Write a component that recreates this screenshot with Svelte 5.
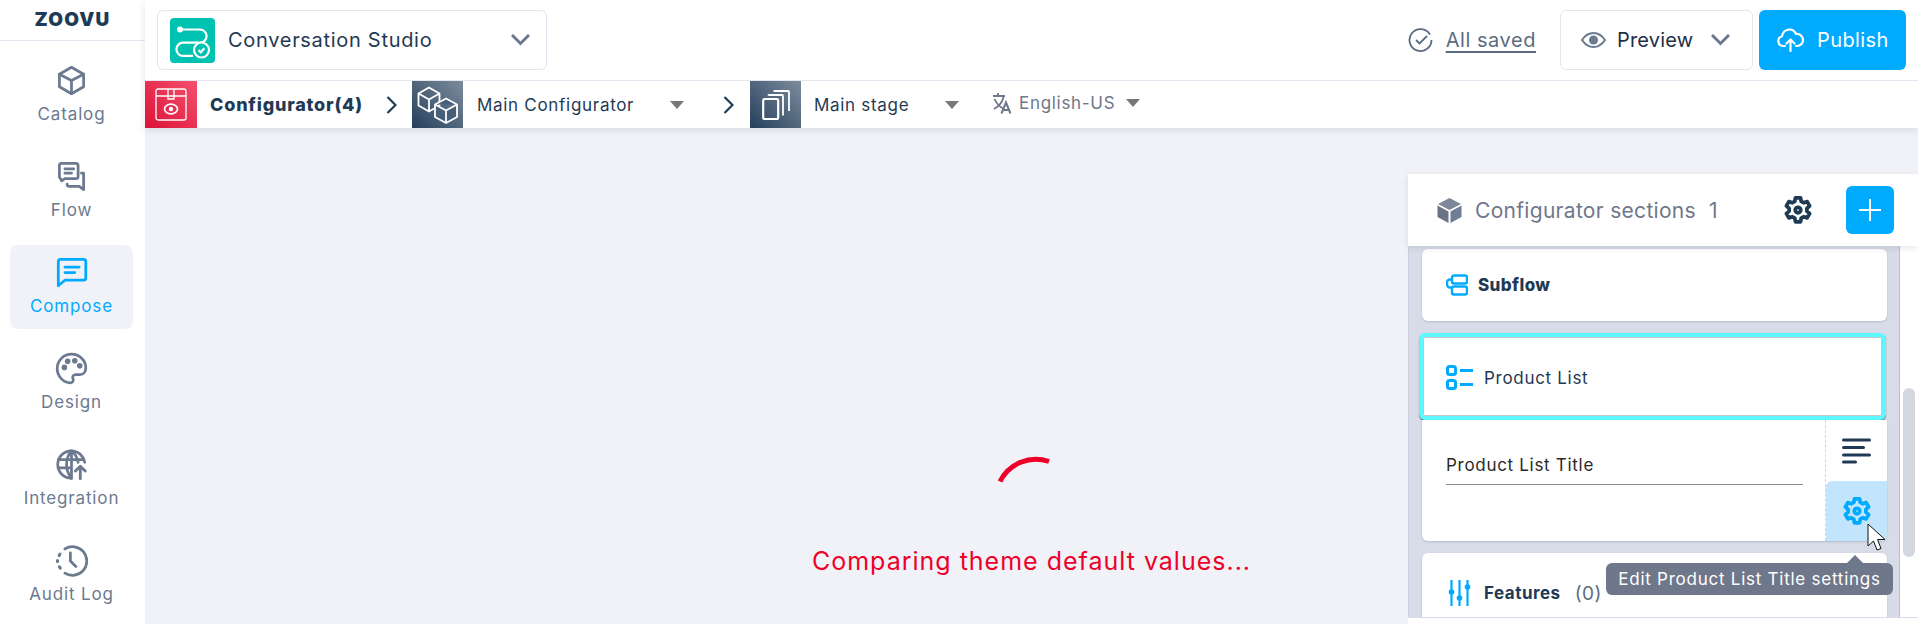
<script lang="ts">
    const nav = [
        { label: "Catalog", icon: "cube" },
        { label: "Flow", icon: "chats" },
        { label: "Compose", icon: "chat", active: true },
        { label: "Design", icon: "palette" },
        { label: "Integration", icon: "globe" },
        { label: "Audit Log", icon: "clock" },
    ];
</script>

{#snippet gear(size)}
    <svg width={size} height={size} viewBox="0 0 24 24" fill="none" stroke="currentColor" stroke-width="3" stroke-linejoin="round">
        <path d="M10 2.200h4l.6 2.900 1.900 1.100 2.800-.9 2 3.400-2.200 2v2.200l2.200 2-2 3.400-2.800-.9-1.900 1.100-.6 2.900h-4l-.6-2.900-1.900-1.100-2.800.9-2-3.400 2.200-2v-2.200l-2.200-2 2-3.400 2.800.9 1.900-1.100z" />
        <circle cx="12" cy="12" r="2.200" />
    </svg>
{/snippet}

{#snippet caret()}
    <svg class="caret" width="14" height="8" viewBox="0 0 14 8"><path d="M0 0h14L7 8z" fill="#77787b" /></svg>
{/snippet}

{#snippet crumbArrow()}
    <svg class="crumb-arrow" width="11" height="18" viewBox="0 0 11 18" fill="none" stroke="#1f3a55" stroke-width="2.200"><path d="M1.500 1l8 8-8 8" /></svg>
{/snippet}

<div class="app">
    <aside class="sidebar">
        <div class="logo">ZOOVU</div>
        <nav>
            {#each nav as item}
                <div class="nav-item" class:active={item.active}>
                    <svg width="33" height="33" viewBox="0 0 30 30" fill="none" stroke="currentColor" stroke-width="2.500" stroke-linejoin="round" stroke-linecap="round">
                        {#if item.icon === "cube"}
                            <path d="M15 3l11 6.300v11.400L15 27 4 20.700V9.300z" />
                            <path d="M4 9.300L15 15l11-5.700M15 15v12" />
                        {:else if item.icon === "chats"}
                            <path d="M6 3h13a2 2 0 0 1 2 2v10a2 2 0 0 1-2 2H9l-3 2-1-2a2 2 0 0 1-1-2V5a2 2 0 0 1 2-2z" />
                            <path d="M9 8h8M9 12h6" />
                            <path d="M24 12h2v15l-4-3H13a2 2 0 0 1-2-2" />
                        {:else if item.icon === "chat"}
                            <path d="M5 3h21a2 2 0 0 1 2 2v15a2 2 0 0 1-2 2H9l-6 5V5a2 2 0 0 1 2-2z" />
                            <path d="M9 10h13M9 15h9" />
                        {:else if item.icon === "palette"}
                            <path d="M15 2C7.800 2 2 7.800 2 15s5.800 13 12 13c2.500 0 3-2 2.300-3.800-.8-2 .4-3.700 2.700-3.700h3.500c3.500 0 5.500-2.500 5.500-6C28 7.500 22.200 2 15 2z" />
                            <circle cx="8.500" cy="14" r="1.300" fill="currentColor" />
                            <circle cx="11.500" cy="8.500" r="1.300" fill="currentColor" />
                            <circle cx="18" cy="8" r="1.300" fill="currentColor" />
                            <circle cx="22.500" cy="12.500" r="1.300" fill="currentColor" />
                        {:else if item.icon === "globe"}
                            <path d="M27 13C25.800 7 20.800 2.500 15 2.500 8 2.500 2.500 8 2.500 15S8 27.500 15 27.500" />
                            <path d="M15 2.500c-6 7-6 18 0 25M15 2.500c3.500 3 5.500 7 6 10.500M3 10.500h23M3 18h11M15 2.500v25" />
                            <path d="M23 28V17M18.500 21l4.500-4.500 4.500 4.500" stroke-width="2.600" />
                        {:else}
                            <path d="M9 4.500A13 13 0 1 1 9 26.500" />
                            <path d="M4.500 9.200l-.7 1.300M2.300 15v1M4 20.700l.8 1.300" stroke-width="2.800" />
                            <path d="M14 8v7.500l5 5" />
                        {/if}
                    </svg>
                    <span>{item.label}</span>
                </div>
            {/each}
        </nav>
    </aside>

    <div class="content">
        <header class="header">
            <div class="toolbar">
                <div class="studio">
                    <span class="studio-icon">
                        <svg width="45" height="45" viewBox="0 0 45 45" fill="none" stroke="#fff" stroke-width="2.200">
                            <circle cx="10" cy="11.500" r="3" fill="#fff" stroke="none" />
                            <path d="M10 11.500h20a6.600 6.600 0 0 1 0 13.200H13a6.600 6.600 0 0 0 0 13.200h10" />
                            <circle cx="31.500" cy="32" r="7.500" fill="#00c2b0" />
                            <path d="M28.500 32l2.300 2.300 3.500-4" />
                        </svg>
                    </span>
                    <span class="studio-name">Conversation Studio</span>
                    <svg class="chevron" width="19" height="12" viewBox="0 0 19 12" fill="none" stroke="#6b7a8f" stroke-width="3"><path d="M1 1l8.500 8.500L18 1" /></svg>
                </div>
                <div class="saved">
                    <svg width="25" height="25" viewBox="0 0 25 25" fill="none" stroke="#5c6c80" stroke-width="1.800">
                        <path d="M22 6.500A11 11 0 1 0 23.500 12" />
                        <path d="M8 12l3.500 3.500L19 8" />
                    </svg>
                    <span>All saved</span>
                </div>
                <div class="preview">
                    <svg width="25" height="16" viewBox="0 0 25 16" fill="none" stroke="#6b7a8f" stroke-width="2">
                        <path d="M1 8c3-4.500 7-7 11.500-7S21 3.500 24 8c-3 4.500-7 7-11.500 7S4 12.500 1 8z" />
                        <circle cx="12.500" cy="8" r="4.500" fill="#6b7a8f" stroke="none" />
                    </svg>
                    <span>Preview</span>
                    <svg width="19" height="12" viewBox="0 0 19 12" fill="none" stroke="#6b7a8f" stroke-width="3"><path d="M1 1l8.500 8.500L18 1" /></svg>
                </div>
                <div class="publish">
                    <svg width="27" height="24" viewBox="0 0 27 24" fill="none" stroke="#fff" stroke-width="2.200" stroke-linecap="round" stroke-linejoin="round">
                        <path d="M8 18H6a5 5 0 0 1-1-9.800C5.500 4 9 1.500 12.500 1.500c3 0 5.500 1.800 6.500 4.500 4-.5 7 2.500 7 6 0 3.300-2.500 6-6 6h-1" />
                        <path d="M13.500 23V12M9.500 15.500l4-4 4 4" />
                    </svg>
                    <span>Publish</span>
                </div>
            </div>
            <div class="crumbs">
                <span class="thumb red">
                    <svg width="32" height="33" viewBox="0 0 32 33" fill="none" stroke="#fff" stroke-width="1.300">
                        <rect x="1" y="1" width="30" height="31" rx="2" />
                        <path d="M1 8h30M13 1v10h6V1" />
                        <ellipse cx="16" cy="21" rx="6.500" ry="4.800" stroke-width="1.700" />
                        <circle cx="16" cy="21" r="2.200" fill="#fff" stroke="none" />
                    </svg>
                </span>
                <strong class="crumb-title">Configurator(4)</strong>
                {@render crumbArrow()}
                <span class="thumb slate">
                    <svg width="42" height="38" viewBox="0 0 42 38" fill="none" stroke="#fff" stroke-width="1.800" stroke-linejoin="round">
                        <path d="M12 1.500l10.500 6v12l-10.500 6-10.500-6v-12zM1.500 7.500l10.500 6 10.500-6M12 13.500v12" />
                        <path d="M29 12.500l11 6v12.500L29 37l-11-6V18.500zM18 18.500L29 24.500l11-6M29 24.500V37" fill="#46607a" />
                    </svg>
                </span>
                <div class="crumb-select main-config"><span>Main Configurator</span>{@render caret()}</div>
                {@render crumbArrow()}
                <span class="thumb slate stage">
                    <svg width="28" height="30" viewBox="0 0 28 30" fill="none" stroke="#fff" stroke-width="1.800" stroke-linejoin="round">
                        <rect x="1.200" y="9" width="15" height="20" rx="1.500" stroke-width="2.200" />
                        <path d="M6.500 5.500V5H20a1 1 0 0 1 1 1v19.500" />
                        <path d="M11.500 1h14.500a1 1 0 0 1 1 1v19" />
                    </svg>
                </span>
                <div class="crumb-select main-stage"><span>Main stage</span>{@render caret()}</div>
                <div class="lang">
                    <svg width="21" height="22" viewBox="0 0 19 22" fill="none" stroke="#6f778a" stroke-width="1.800">
                        <path d="M0 4h12M5 1v3M1.500 7c2 4.500 5 7.500 8.500 9.500M10.500 5c-1 5-4 9-9.500 12" />
                        <path d="M8.500 21.500l4.500-11 4.500 11M10 18h6" stroke-width="2" />
                    </svg>
                    <span>English-US</span>
                    {@render caret()}
                </div>
            </div>
        </header>

        <main class="canvas">
            <div class="loader">
                <svg width="84" height="50" viewBox="0 0 84 50" fill="none">
                    <path d="M10 29.500A40 40 0 0 1 59 9.500" stroke="#ee0028" stroke-width="5" />
                </svg>
                <p>Comparing theme default values...</p>
            </div>

            <section class="panel">
                <div class="panel-head">
                    <svg width="25" height="25" viewBox="0 0 25 25">
                        <path d="M12.500 0l11.500 6-11.500 6L1 6z" fill="#7d8799" />
                        <path d="M.5 7.500l11 6V25l-11-6z" fill="#6b7486" />
                        <path d="M24.500 7.500l-11 6V25l11-6z" fill="#6f7d96" />
                    </svg>
                    <span class="panel-title">Configurator sections</span>
                    <span class="panel-count">1</span>
                    <span class="panel-gear">{@render gear(30)}</span>
                    <button class="add" aria-label="Add">
                        <svg width="22" height="22" viewBox="0 0 22 22" stroke="#fff" stroke-width="2"><path d="M11 0v22M0 11h22" /></svg>
                    </button>
                </div>
                <div class="panel-body">
                    <div class="list">
                        <div class="card subflow">
                            <svg width="22" height="22" viewBox="0 0 22 22" fill="none" stroke="#00aaff" stroke-width="2.400">
                                <rect x="6" y="1.500" width="15" height="8" rx="2" />
                                <rect x="6" y="12.500" width="15" height="8" rx="2" />
                                <path d="M6 5.500H4a3 3 0 0 0-3 3v2a3 3 0 0 0 3 3h2" />
                            </svg>
                            <strong>Subflow</strong>
                        </div>
                        <div class="product">
                            <div class="product-head">
                                <svg width="27" height="25" viewBox="0 0 27 25" fill="none" stroke="#00aaff" stroke-width="3">
                                    <rect x="1.500" y="1.500" width="8" height="8" rx="2" />
                                    <rect x="1.500" y="15.500" width="8" height="8" rx="2" />
                                    <path d="M14 5.500h13M14 19.500h13" />
                                </svg>
                                <span>Product List</span>
                            </div>
                            <div class="product-body">
                                <div class="title-field"><span>Product List Title</span></div>
                                <div class="actions">
                                    <div class="action">
                                        <svg width="29" height="26" viewBox="0 0 29 26" stroke="#1f3a55" stroke-width="3" stroke-linecap="round">
                                            <path d="M1.500 2h26M1.500 9.500h20M1.500 17h26M1.500 24h12" />
                                        </svg>
                                    </div>
                                    <div class="action hovered">{@render gear(30)}</div>
                                </div>
                            </div>
                        </div>
                        <div class="card features">
                            <svg width="23" height="26" viewBox="0 0 23 26" stroke="#00aaff" stroke-width="2.200" fill="#00aaff">
                                <path d="M3.500 0v26M11.500 0v26M19.500 0v26" />
                                <circle cx="3.500" cy="12" r="2.800" stroke="none" />
                                <circle cx="11.500" cy="18" r="2.800" stroke="none" />
                                <circle cx="19.500" cy="7" r="2.800" stroke="none" />
                            </svg>
                            <strong>Features</strong>
                            <span>(0)</span>
                        </div>
                        <div class="tooltip">Edit Product List Title settings</div>
                        <svg class="cursor" width="19" height="29" viewBox="0 0 19 29">
                            <path d="M1 1v22l5.500-5 3.500 9 4-1.500-3.500-9h7.500z" fill="#fff" stroke="#111" stroke-width="1" />
                        </svg>
                    </div>
                    <div class="rail"><div class="rail-thumb"></div></div>
                </div>
                <div class="panel-foot"></div>
            </section>
        </main>
    </div>
</div>

<style>
    :global(body) {
        margin: 0;
        font-family: "Inter", "Liberation Sans", sans-serif;
        color: #1f3a55;
    }

    .app {
        display: flex;
        width: 1918px;
        height: 624px;
        overflow: hidden;
        background: #f0f2f7;
    }

    .sidebar {
        width: 145px;
        flex: none;
        background: #fff;
    }

    .logo {
        height: 41px;
        box-sizing: border-box;
        border-bottom: 1px solid #e3e6f0;
        padding-top: 8px;
        text-align: center;
        font-size: 19px;
        line-height: 23px;
        font-weight: 900;
        letter-spacing: 1.200px;
        color: #1f3a55;
    }

    nav {
        display: flex;
        flex-direction: column;
        gap: 12px;
        margin: 12px 12px 0 10px;
    }

    .nav-item {
        height: 84px;
        box-sizing: border-box;
        padding-top: 11px;
        display: flex;
        flex-direction: column;
        align-items: center;
        gap: 5px;
        border-radius: 8px;
        color: #6b7a8f;
        font-size: 17px;
        letter-spacing: 0.850px;
        line-height: 24px;
    }

    .nav-item svg {
        flex: none;
    }

    .nav-item.active {
        background: #f0f2f7;
        color: #00aaff;
    }

    .content {
        flex: 1;
        min-width: 0;
        display: flex;
        flex-direction: column;
    }

    .header {
        z-index: 1;
        background: #fff;
        box-shadow: 0 2px 8px rgba(40, 50, 80, 0.12);
    }

    .toolbar {
        height: 81px;
        box-sizing: border-box;
        border-bottom: 1px solid #e3e6f0;
        padding: 10px 12px 0 12px;
        display: flex;
        align-items: flex-start;
    }

    .studio {
        width: 390px;
        height: 60px;
        box-sizing: border-box;
        border: 1px solid #e3e6f0;
        border-radius: 6px;
        display: flex;
        align-items: center;
        padding: 0 16px 0 12px;
    }

    .studio-icon {
        width: 45px;
        height: 45px;
        border-radius: 4px;
        background: #00c2b0;
        display: flex;
    }

    .studio-name {
        margin-left: 13px;
        font-size: 20px;
        letter-spacing: 0.700px;
        color: #1f3a55;
    }

    .chevron {
        margin-left: auto;
    }

    .saved {
        margin-left: auto;
        height: 60px;
        display: flex;
        align-items: center;
        gap: 13px;
        font-size: 20px;
        letter-spacing: 0.550px;
        color: #5c6c80;
    }

    .saved span {
        text-decoration: underline;
        text-underline-offset: 4px;
    }

    .preview {
        margin-left: 24px;
        width: 193px;
        height: 60px;
        box-sizing: border-box;
        border: 1px solid #e3e6f0;
        border-radius: 6px;
        display: flex;
        align-items: center;
        padding-left: 20px;
        font-size: 20px;
        letter-spacing: 0.200px;
        color: #1f2f45;
    }

    .preview span {
        margin: 0 18px 0 11px;
    }

    .publish {
        margin-left: 6px;
        width: 147px;
        height: 60px;
        box-sizing: border-box;
        border-radius: 6px;
        background: #00aaff;
        color: #fff;
        display: flex;
        align-items: center;
        padding-left: 18px;
        gap: 13px;
        font-size: 20px;
        letter-spacing: 0.400px;
    }

    .crumbs {
        height: 47px;
        display: flex;
        align-items: center;
        font-size: 17px;
        letter-spacing: 0.700px;
        color: #1f3a55;
    }

    .thumb {
        height: 47px;
        display: flex;
        align-items: center;
        justify-content: center;
    }

    .thumb.red {
        width: 52px;
        background: linear-gradient(45deg, #dc1238, #f5506e);
    }

    .thumb.slate {
        width: 51px;
        background: linear-gradient(45deg, #25405c, #7d8c9c);
    }

    .thumb.stage {
        margin-left: 1px;
    }

    .crumb-title {
        width: 189px;
        box-sizing: border-box;
        padding-left: 13px;
        font-size: 18px;
        letter-spacing: 0.800px;
        font-weight: 800;
    }

    .crumb-arrow {
        margin-right: 15px;
    }

    .crumb-select {
        display: flex;
        align-items: center;
        box-sizing: border-box;
        padding-left: 14px;
    }

    .main-config {
        width: 260px;
    }

    .main-config .caret {
        margin-left: auto;
        margin-right: 39px;
    }

    .main-stage {
        width: 191px;
        padding-left: 13px;
    }

    .main-stage .caret {
        margin-left: auto;
        margin-right: 33px;
    }

    .lang {
        display: flex;
        align-items: center;
        gap: 6px;
        color: #6f778a;
        margin-top: -4px;
    }

    .lang .caret {
        margin-left: 5px;
    }

    .canvas {
        flex: 1;
        position: relative;
    }

    .loader {
        display: flex;
        flex-direction: column;
        align-items: center;
        padding-top: 324px;
    }

    .loader svg {
        display: block;
    }

    .loader p {
        margin: 44px 0 0;
        font-size: 25px;
        letter-spacing: 1px;
        line-height: 30px;
        color: #ee0028;
    }

    .panel {
        position: absolute;
        top: 46px;
        right: 0;
        bottom: 0;
        width: 510px;
        display: flex;
        flex-direction: column;
        background: #fff;
    }

    .panel-head {
        height: 72px;
        flex: none;
        box-sizing: border-box;
        padding: 0 24px 0 29px;
        display: flex;
        align-items: center;
        background: #fff;
        z-index: 1;
        box-shadow: 0 2px 6px rgba(40, 50, 80, 0.12);
        color: #6f778a;
        font-size: 21px;
        letter-spacing: 0.300px;
    }

    .panel-title {
        margin-left: 13px;
    }

    .panel-count {
        margin-left: 13px;
    }

    .panel-gear {
        display: flex;
        margin-left: auto;
        color: #1f3a55;
    }

    .add {
        width: 48px;
        height: 48px;
        margin: 0 0 0 33px;
        padding: 0;
        border: 0;
        border-radius: 6px;
        background: #00aaff;
        display: flex;
        align-items: center;
        justify-content: center;
    }

    .panel-body {
        flex: 1;
        min-height: 0;
        display: flex;
    }

    .list {
        position: relative;
        width: 492px;
        box-sizing: border-box;
        padding: 3px 12px 0 13px;
        background: #d8dce8;
        border-left: 1px solid #c9cedb;
        border-right: 1px solid #b9bfce;
        overflow: hidden;
    }

    .card {
        background: #fff;
        border-radius: 6px;
        box-shadow: 0 1px 2px rgba(40, 50, 80, 0.2);
        display: flex;
        align-items: center;
    }

    .subflow {
        height: 72px;
        padding-left: 24px;
        gap: 10px;
        font-size: 17px;
        letter-spacing: 0.400px;
    }

    .subflow strong {
        font-weight: 800;
    }

    .product {
        margin-top: 12px;
    }

    .product-head {
        height: 87px;
        width: 467px;
        margin-left: -3px;
        box-sizing: border-box;
        border: 4px solid #5cf7ff;
        border-radius: 6px;
        background: #fff;
        box-shadow: 0 1px 1px rgba(0, 0, 0, 0.55), inset 0 0 0 1px rgba(90, 90, 90, 0.35);
        display: flex;
        align-items: center;
        gap: 11px;
        padding: 2px 0 0 23px;
        font-size: 17px;
        letter-spacing: 0.700px;
    }

    .product-body {
        height: 121px;
        background: #fff;
        border-radius: 0 0 6px 6px;
        box-shadow: 0 1px 2px rgba(40, 50, 80, 0.2);
        display: flex;
    }

    .title-field {
        width: 357px;
        margin: 24px 0 0 24px;
        height: 41px;
        box-sizing: border-box;
        border-bottom: 1px solid #8a8a8a;
        font-size: 17px;
        letter-spacing: 0.700px;
        color: #2a2a2a;
        line-height: 24px;
        padding-top: 9px;
    }

    .actions {
        margin-left: auto;
        width: 61px;
        border-left: 1px dashed #cfd3df;
        display: flex;
        flex-direction: column;
        justify-content: flex-end;
    }

    .action {
        height: 60px;
        display: flex;
        align-items: center;
        justify-content: center;
    }

    .action.hovered {
        background: #c3e5fb;
        color: #00aaff;
        border-radius: 6px 0 6px 0;
    }

    .features {
        margin-top: 12px;
        height: 80px;
        padding-left: 26px;
        font-size: 17px;
    }

    .features strong {
        margin-left: 13px;
        letter-spacing: 0.500px;
    }

    .features span {
        margin-left: 14px;
        font-size: 19px;
        letter-spacing: 0.500px;
        color: #5c6c80;
    }

    .tooltip {
        position: absolute;
        left: 197px;
        top: 317px;
        width: 287px;
        height: 32px;
        box-sizing: border-box;
        border-radius: 6px;
        background: #6f778a;
        color: #fff;
        font-size: 17px;
        letter-spacing: 0.750px;
        line-height: 32px;
        text-align: center;
        white-space: nowrap;
    }

    .tooltip::before {
        content: "";
        position: absolute;
        left: 241px;
        top: -8px;
        border: 8px solid transparent;
        border-top: 0;
        border-bottom-color: #6f778a;
    }

    .cursor {
        position: absolute;
        left: 458px;
        top: 277px;
    }

    .rail {
        width: 18px;
        background: #fff;
    }

    .rail-thumb {
        width: 12px;
        height: 169px;
        margin: 142px 0 0 3px;
        border-radius: 6px;
        background: #d3d8e0;
    }

    .panel-foot {
        height: 6px;
        flex: none;
        border-top: 1px solid #d8dce8;
        background: #fff;
        z-index: 1;
    }
</style>
